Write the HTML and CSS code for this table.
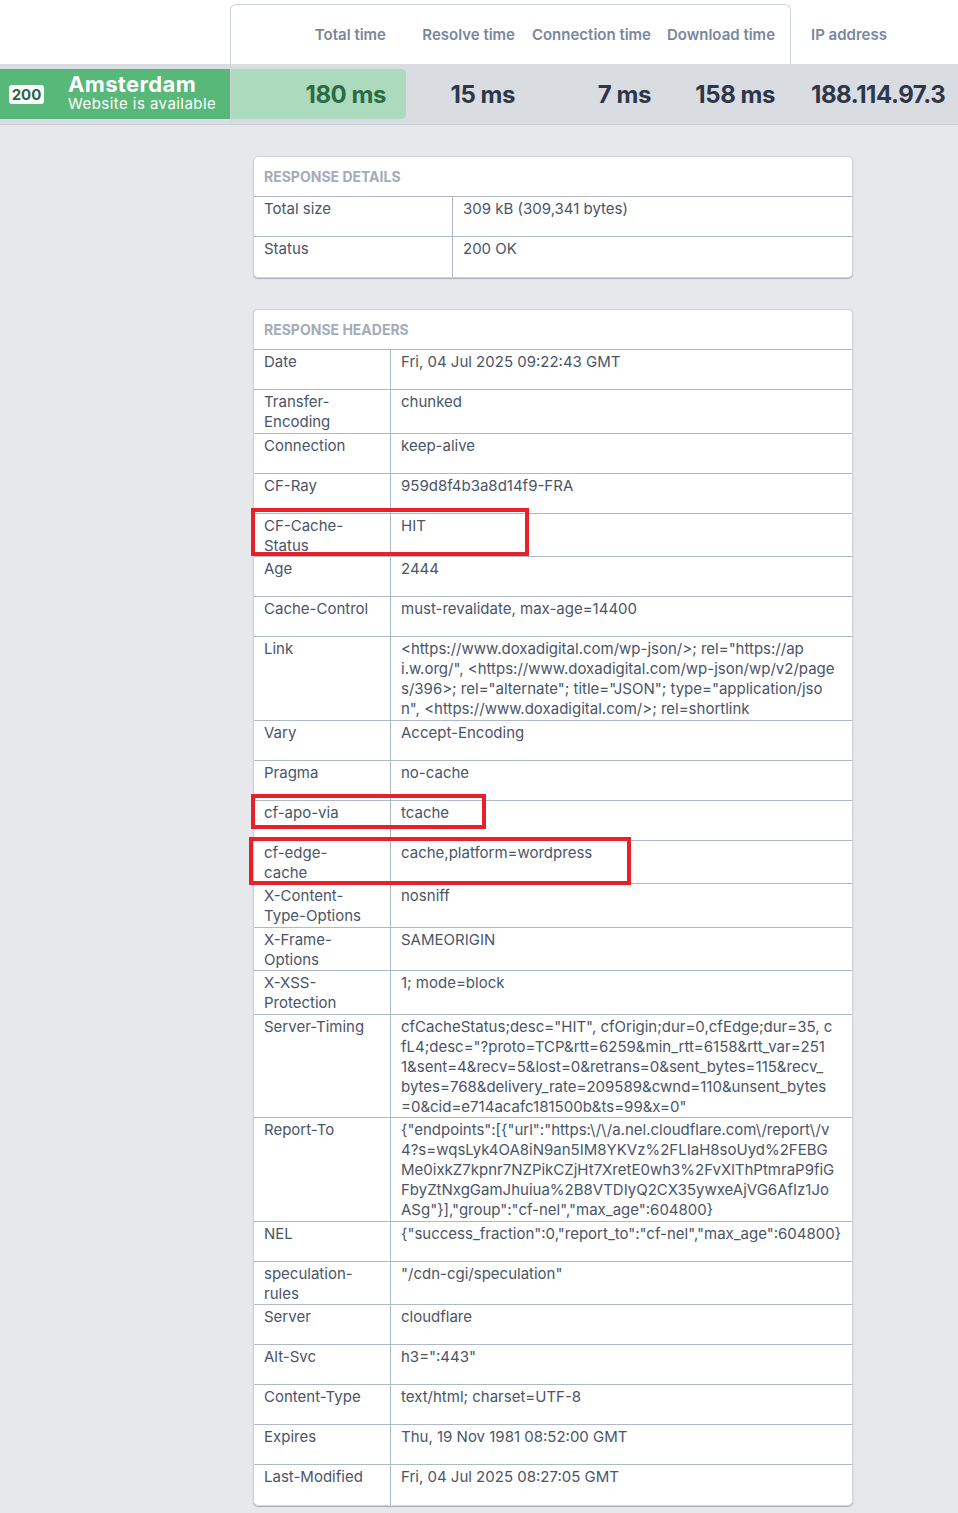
FILE: index.html
```html
<!DOCTYPE html>
<html lang="en">
<head>
<meta charset="utf-8">
<title>Amsterdam - Website is available</title>
<link rel="stylesheet" href="styles.css">
</head>
<body>
<div class="page">
  <header class="top">
    <div class="labels-row">
      <div class="spacer"></div>
      <div class="tab">
        <div class="lab c1">Total time</div>
        <div class="lab c2">Resolve time</div>
        <div class="lab c3">Connection time</div>
        <div class="lab c4">Download time</div>
      </div>
      <div class="lab ip">IP address</div>
    </div>
    <div class="values-row">
      <div class="loc">
        <span class="badge">200</span>
        <div class="loc-text">
          <div class="city">Amsterdam</div>
          <div class="avail">Website is available</div>
        </div>
      </div>
      <div class="vals">
        <div class="val c1 total">180 ms</div>
        <div class="val c2">15 ms</div>
        <div class="val c3">7 ms</div>
        <div class="val c4">158 ms</div>
        <div class="val ip">188.114.97.3</div>
      </div>
    </div>
  </header>

  <main class="content">
    <section class="card details">
      <div class="card-head">Response details</div>
      <div class="row"><div class="k">Total size</div><div class="v">309 kB (309,341 bytes)</div></div>
      <div class="row"><div class="k">Status</div><div class="v">200 OK</div></div>
    </section>

    <section class="card headers">
      <div class="card-head">Response headers</div>
      <div class="row"><div class="k">Date</div><div class="v">Fri, 04 Jul 2025 09:22:43 GMT</div></div>
      <div class="row"><div class="k">Transfer-Encoding</div><div class="v">chunked</div></div>
      <div class="row"><div class="k">Connection</div><div class="v">keep-alive</div></div>
      <div class="row"><div class="k">CF-Ray</div><div class="v">959d8f4b3a8d14f9-FRA</div></div>
      <div class="row"><div class="k">CF-Cache-Status</div><div class="v">HIT</div></div>
      <div class="row"><div class="k">Age</div><div class="v">2444</div></div>
      <div class="row"><div class="k">Cache-Control</div><div class="v">must-revalidate, max-age=14400</div></div>
      <div class="row"><div class="k">Link</div><div class="v lines">&lt;https://www.doxadigital.com/wp-json/&gt;; rel="https://ap<br>i.w.org/", &lt;https://www.doxadigital.com/wp-json/wp/v2/page<br>s/396&gt;; rel="alternate"; title="JSON"; type="application/jso<br>n", &lt;https://www.doxadigital.com/&gt;; rel=shortlink</div></div>
      <div class="row"><div class="k">Vary</div><div class="v">Accept-Encoding</div></div>
      <div class="row"><div class="k">Pragma</div><div class="v">no-cache</div></div>
      <div class="row"><div class="k">cf-apo-via</div><div class="v">tcache</div></div>
      <div class="row"><div class="k">cf-edge-cache</div><div class="v">cache,platform=wordpress</div></div>
      <div class="row"><div class="k">X-Content-Type-Options</div><div class="v">nosniff</div></div>
      <div class="row"><div class="k">X-Frame-Options</div><div class="v">SAMEORIGIN</div></div>
      <div class="row"><div class="k">X-XSS-Protection</div><div class="v">1; mode=block</div></div>
      <div class="row"><div class="k">Server-Timing</div><div class="v lines">cfCacheStatus;desc="HIT", cfOrigin;dur=0,cfEdge;dur=35, c<br>fL4;desc="?proto=TCP&amp;rtt=6259&amp;min_rtt=6158&amp;rtt_var=251<br>1&amp;sent=4&amp;recv=5&amp;lost=0&amp;retrans=0&amp;sent_bytes=115&amp;recv_<br>bytes=768&amp;delivery_rate=209589&amp;cwnd=110&amp;unsent_bytes<br>=0&amp;cid=e714acafc181500b&amp;ts=99&amp;x=0"</div></div>
      <div class="row"><div class="k">Report-To</div><div class="v lines">{"endpoints":[{"url":"https:\/\/a.nel.cloudflare.com\/report\/v<br>4?s=wqsLyk4OA8iN9an5IM8YKVz%2FLIaH8soUyd%2FEBG<br>Me0ixkZ7kpnr7NZPikCZjHt7XretE0wh3%2FvXlThPtmraP9fiG<br>FbyZtNxgGamJhuiua%2B8VTDIyQ2CX35ywxeAjVG6AfIz1Jo<br>ASg"}],"group":"cf-nel","max_age":604800}</div></div>
      <div class="row"><div class="k">NEL</div><div class="v lines">{"success_fraction":0,"report_to":"cf-nel","max_age":604800}</div></div>
      <div class="row"><div class="k">speculation-rules</div><div class="v">"/cdn-cgi/speculation"</div></div>
      <div class="row"><div class="k">Server</div><div class="v">cloudflare</div></div>
      <div class="row"><div class="k">Alt-Svc</div><div class="v">h3=":443"</div></div>
      <div class="row"><div class="k">Content-Type</div><div class="v">text/html; charset=UTF-8</div></div>
      <div class="row"><div class="k">Expires</div><div class="v">Thu, 19 Nov 1981 08:52:00 GMT</div></div>
      <div class="row"><div class="k">Last-Modified</div><div class="v">Fri, 04 Jul 2025 08:27:05 GMT</div></div>
    </section>
  </main>

  <div class="mark mark-1"></div>
  <div class="mark mark-2"></div>
  <div class="mark mark-3"></div>
</div>
</body>
</html>
```
FILE: styles.css
```css
* { box-sizing: border-box; }

html, body {
  margin: 0;
  padding: 0;
}

body {
  background: #e7e8eb;
  font-family: Inter, "Liberation Sans", sans-serif;
  color: #4a5568;
}

.page {
  position: relative;
  min-height: 1513px;
}

/* ---------- top summary ---------- */
.top {
  background: #fff;
}

.labels-row {
  display: flex;
  height: 64px;
  background: #fff;
}

.spacer {
  width: 230px;
  flex: none;
}

.tab {
  display: flex;
  margin-top: 4px;
  height: 60px;
  width: 561px;
  flex: none;
  border: 1px solid #cdd3db;
  border-bottom: none;
  border-radius: 6px 6px 0 0;
}

.lab {
  display: flex;
  align-items: center;
  justify-content: flex-end;
  font-size: 15px;
  font-weight: 600;
  color: #7a879c;
  white-space: nowrap;
}

.c1 { width: 175px; padding-right: 20px; }
.c2 { width: 129px; padding-right: 20px; }
.c3 { width: 136px; padding-right: 20px; }
.c4 { width: 119px; padding-right: 15px; }

.lab.ip {
  justify-content: flex-start;
  padding-left: 20px;
  height: 64px;
  padding-top: 4px;
}

.values-row {
  display: flex;
  height: 61px;
  background: #d9dce1;
  border-bottom: 1px solid #cbd0d7;
}

.loc {
  width: 230px;
  flex: none;
  margin: 5px 0;
  height: 50px;
  background: #58b879;
  display: flex;
  align-items: center;
  padding-left: 9px;
}

.badge {
  display: inline-block;
  width: 35px;
  height: 19px;
  line-height: 19px;
  text-align: center;
  background: #fff;
  color: #276749;
  font-size: 15px;
  font-weight: 700;
  border-radius: 3px;
  margin-right: 24px;
  margin-top: 1px;
}

.loc-text {
  color: #fff;
  display: flex;
  flex-direction: column;
  margin-top: -3px;
}

.city {
  font-size: 22px;
  font-weight: 700;
  line-height: 22px;
  letter-spacing: 0.35px;
}

.avail {
  font-size: 15px;
  line-height: 17px;
  letter-spacing: 0.45px;
}

.vals {
  display: flex;
  border-left: 1px solid #cdd3db;
  height: 60px;
}

.val {
  display: flex;
  align-items: center;
  justify-content: flex-end;
  font-size: 24px;
  font-weight: 700;
  color: #2d3748;
  white-space: nowrap;
  letter-spacing: -0.45px;
}

.val.total {
  margin: 5px 0;
  height: 50px;
  background: #abdbbc;
  color: #2b6a47;
  border-radius: 0 5px 5px 0;
}

.val.ip {
  padding-left: 21px;
}

/* ---------- cards ---------- */
.content {
  padding: 31px 0 8px 253px;
  display: flex;
  flex-direction: column;
  gap: 31px;
}

.card {
  width: 600px;
  background: #fff;
  border: 1px solid #cdd3db;
  border-radius: 5px;
  box-shadow: 0 1px 1px rgba(60, 70, 90, 0.35);
  font-size: 15px;
  line-height: 20px;
}

.card-head {
  height: 40px;
  line-height: 40px;
  padding-left: 10px;
  font-size: 14px;
  font-weight: 700;
  text-transform: uppercase;
  color: #a3acb9;
  border-bottom: 1px solid #aeb8c6;
}

.row {
  display: grid;
  min-height: 40px;
  border-bottom: 1px solid #aeb8c6;
}

.row:last-child {
  border-bottom: none;
}

.details .row { grid-template-columns: 199px 1fr; }
.headers .row { grid-template-columns: 137px 1fr; }

.k, .v {
  padding: 2px 20px 0.5px 10px;
  color: #4a5568;
}

.headers .k {
  padding-right: 21px;
}

.k {
  border-right: 1px solid #aeb8c6;
}

.v {
  word-break: break-all;
}

.v.lines {
  white-space: nowrap;
  padding-right: 0;
}

/* ---------- annotation marks ---------- */
.mark {
  position: absolute;
  border: 4px solid #e8202a;
  pointer-events: none;
}

.mark-1 { left: 251px; top: 508px; width: 278px; height: 48px; }
.mark-2 { left: 251px; top: 794px; width: 235px; height: 35px; }
.mark-3 { left: 249px; top: 837px; width: 382px; height: 48px; }
```
